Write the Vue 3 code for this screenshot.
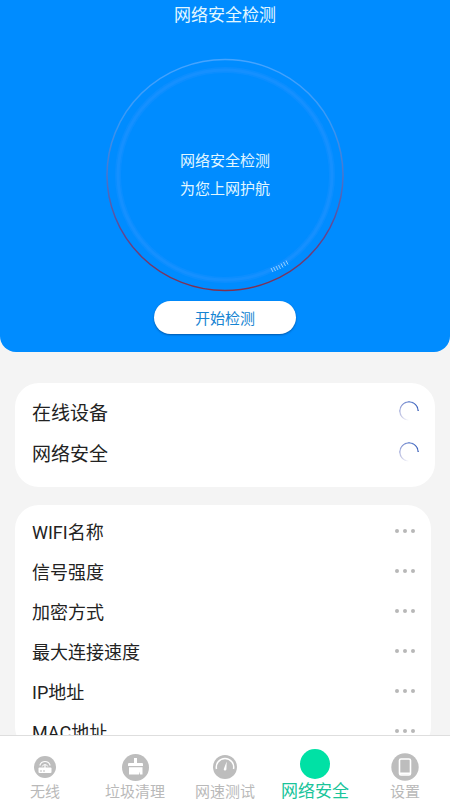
<script setup>
const tasks = ['在线设备', '网络安全']
const details = ['WIFI名称', '信号强度', '加密方式', '最大连接速度', 'IP地址', 'MAC地址']
const tabs = [
  { id: 'wifi', label: '无线' },
  { id: 'clean', label: '垃圾清理' },
  { id: 'speed', label: '网速测试' },
  { id: 'safe', label: '网络安全', active: true },
  { id: 'settings', label: '设置' },
]
</script>

<template>
  <div class="screen">
    <main class="content">
      <header class="hero">
        <h1 class="title">网络安全检测</h1>
        <div class="radar">
          <svg class="rings" viewBox="0 0 240 234" aria-hidden="true">
            <defs>
              <linearGradient id="ring" x1="0" y1="0" x2="0" y2="1">
                <stop offset="0" stop-color="#46a4ff" />
                <stop offset="0.28" stop-color="#3a98f4" />
                <stop offset="0.5" stop-color="#4a75cc" />
                <stop offset="0.75" stop-color="#65448e" />
                <stop offset="1" stop-color="#80304f" />
              </linearGradient>
            </defs>
            <ellipse cx="120" cy="117" rx="118" ry="115.500" fill="none" stroke="url(#ring)" stroke-width="1.500" />
            <ellipse cx="120" cy="117" rx="107" ry="105" fill="none" stroke="#4c9cff" stroke-opacity=".14" stroke-width="6" />
            <ellipse cx="120" cy="117" rx="107" ry="105" fill="none" stroke="#4c9cff" stroke-opacity=".16" stroke-width="3" />
            <g stroke="#a9dcff" stroke-width="1" stroke-opacity=".85">
              <path d="M166 210l2 4M168.500 209l2 4M171 208l2 4M173.500 207l2 4M176 205.500l2 4M178.500 204l2 4M181 202.500l2 4" />
            </g>
          </svg>
          <p class="slogan">网络安全检测<br />为您上网护航</p>
        </div>
        <button class="start" type="button">开始检测</button>
      </header>

      <ul class="card tasks">
        <li v-for="task in tasks" :key="task" class="task">
          <span>{{ task }}</span>
          <span class="spinner"></span>
        </li>
      </ul>

      <ul class="card details">
        <li v-for="item in details" :key="item" class="detail">
          <span>{{ item }}</span>
          <span class="dots"><i></i><i></i><i></i></span>
        </li>
      </ul>
    </main>

    <nav class="tabs">
      <a v-for="tab in tabs" :key="tab.id" href="#" class="tab" :class="{ active: tab.active }">
        <span class="icon">
          <svg v-if="tab.id === 'wifi'" width="22" height="22" viewBox="0 0 22 22" aria-hidden="true">
            <circle cx="11" cy="11" r="11" fill="#bdbdbd" />
            <path d="M5.800 9.500a5.400 5.400 0 0 1 10.400 0" fill="none" stroke="#fff" stroke-width="1.100" />
            <path d="M8.200 10.500a3 3 0 0 1 5.600 0" fill="none" stroke="#fff" />
            <path d="M11 9v3" stroke="#fff" stroke-width="1.200" />
            <rect x="4.500" y="11.500" width="13" height="5.500" rx="1" fill="#fff" />
            <path d="M6 15h2M9 15h2" stroke="#bdbdbd" />
          </svg>
          <svg v-else-if="tab.id === 'clean'" width="27" height="27" viewBox="0 0 27 27" aria-hidden="true">
            <circle cx="13.500" cy="13.500" r="13.500" fill="#bdbdbd" />
            <path d="M12 4h3v5h5a1 1 0 0 1 1 1v2H6v-2a1 1 0 0 1 1-1h5z" fill="#fff" />
            <path d="M7 13.200h13.500v7.300H18v-3l-1 3H7z" fill="#fff" />
          </svg>
          <svg v-else-if="tab.id === 'speed'" width="24" height="24" viewBox="0 0 24 24" aria-hidden="true">
            <circle cx="12" cy="12" r="12" fill="#bdbdbd" />
            <path d="M3.500 14a8.700 8.700 0 1 1 17 0" fill="none" stroke="#fff" stroke-width="1.500" />
            <path d="M13.700 6.500l-.3 8a1.300 1.300 0 0 1-2.600-.5z" fill="#fff" />
          </svg>
          <svg v-else-if="tab.id === 'safe'" width="30" height="30" viewBox="0 0 30 30" aria-hidden="true">
            <circle cx="15" cy="15" r="15" fill="#00e1a5" />
          </svg>
          <svg v-else width="28" height="28" viewBox="0 0 28 28" aria-hidden="true">
            <circle cx="14" cy="14" r="13.700" fill="#bdbdbd" />
            <rect x="8.500" y="6" width="11" height="16" rx="1.500" fill="none" stroke="#fff" stroke-width="1.600" />
            <path d="M9 19.500h10v2H9z" fill="#fff" />
          </svg>
        </span>
        <span class="label">{{ tab.label }}</span>
      </a>
    </nav>
  </div>
</template>

<style>
body {
  margin: 0;
  background: #f4f4f4;
}
</style>

<style scoped>
.screen {
  display: flex;
  flex-direction: column;
  height: 100vh;
  overflow: hidden;
  background: #f4f4f4;
  color: #222;
  font-family: Roboto, "Noto Sans CJK SC", sans-serif;
}

.content {
  flex: 1;
  min-height: 0;
  overflow: hidden;
}

.hero {
  display: flex;
  flex-direction: column;
  align-items: center;
  padding-bottom: 18px;
  border-radius: 0 0 16px 16px;
  background: #008cff;
  color: #e2f7ff;
}

.title {
  margin: 0;
  padding-top: 3px;
  font-size: 17px;
  font-weight: 400;
  line-height: 24px;
}

.radar {
  display: grid;
  place-items: center;
  margin-top: 31px;
}

.rings,
.slogan {
  grid-area: 1 / 1;
}

.rings {
  width: 240px;
  height: 234px;
}

.slogan {
  margin: 0;
  font-size: 15px;
  line-height: 28px;
  text-align: center;
}

.start {
  width: 142px;
  height: 33px;
  margin-top: 9px;
  padding: 0;
  border: 0;
  border-radius: 17px;
  background: #fff;
  box-shadow: 0 1px 2px rgba(0, 40, 90, 0.5);
  color: #1684d2;
  font: inherit;
  font-size: 15px;
}

.card {
  margin: 0 15px;
  padding: 0 16px 0 17px;
  border-radius: 24px;
  background: #fff;
  list-style: none;
}

.tasks {
  margin-top: 31px;
  padding-top: 8px;
  padding-bottom: 14px;
  font-size: 19px;
}

.task,
.detail {
  display: flex;
  align-items: center;
  justify-content: space-between;
}

.task {
  height: 41px;
}

.spinner {
  width: 20px;
  height: 20px;
  margin-bottom: 2px;
  border-radius: 50%;
  background: conic-gradient(from 90deg, transparent 0 25%, #c9cbe6 40%, #8d9bd4 60%, #5f80cc 80%, #2f56b4 100%);
  -webkit-mask: radial-gradient(circle, transparent 8px, #000 9px);
  mask: radial-gradient(circle, transparent 8px, #000 9px);
}

.details {
  margin-top: 18px;
  margin-right: 19px;
  padding-top: 6px;
  font-size: 18px;
}

.detail {
  height: 40px;
}

.dots {
  display: flex;
  gap: 4px;
}

.dots i {
  width: 4px;
  height: 4px;
  border-radius: 50%;
  background: #b8b8b8;
}

.tabs {
  display: flex;
  flex: none;
  height: 64px;
  border-top: 1px solid #dedede;
  background: #fff;
}

.tab {
  display: flex;
  flex: 1;
  flex-direction: column;
  align-items: center;
  color: #b9b9b9;
  font-size: 15px;
  text-decoration: none;
  white-space: nowrap;
}

.icon {
  display: grid;
  flex: none;
  place-items: center;
  height: 30px;
  margin-top: 16px;
}

.label {
  line-height: 20px;
}

.active {
  color: #19c49a;
  font-size: 17px;
}

.active .icon {
  height: 32px;
  margin-top: 12px;
}

.active .label {
  line-height: 22px;
}
</style>
